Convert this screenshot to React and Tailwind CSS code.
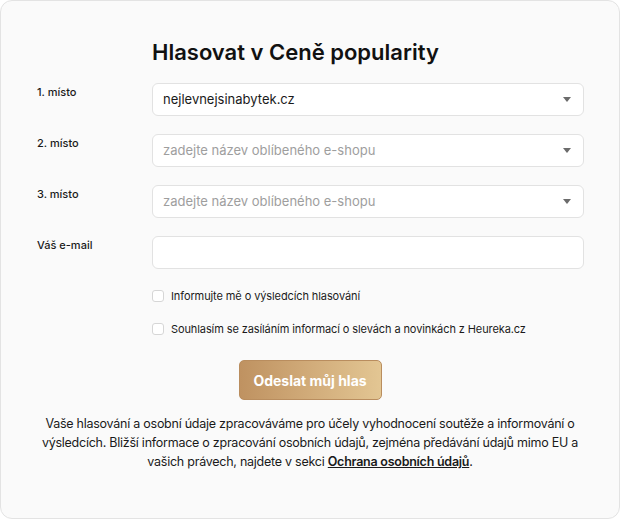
import React, { useState } from 'react';

const font = { fontFamily: 'Inter, "Noto Sans", sans-serif' };

function Arrow() {
  return (
    <svg width="8" height="5" viewBox="0 0 8 5" className="shrink-0">
      <path d="M0 0h8L4 5z" fill="#6b6b6b" />
    </svg>
  );
}

function SelectRow({ label, value, placeholder }) {
  return (
    <div className="flex">
      <div className="w-[115px] shrink-0 pt-[1px] text-[11px] font-medium text-[#1a1a1a]">{label}</div>
      <div className="flex h-[33px] w-[432px] items-center justify-between rounded-[6px] border border-[#e2e2e2] bg-white pl-[10px] pr-[12px]">
        {value ? (
          <span className="text-[13px] text-[#1a1a1a]">{value}</span>
        ) : (
          <span className="text-[13px] text-[#9e9e9e]">{placeholder}</span>
        )}
        <Arrow />
      </div>
    </div>
  );
}

function Check({ label }) {
  const [on, setOn] = useState(false);
  return (
    <label className="flex items-center gap-[7px] cursor-pointer">
      <span
        onClick={() => setOn(!on)}
        className={`h-[12px] w-[12px] rounded-[3px] border ${on ? 'border-[#c09464] bg-[#c09464]' : 'border-[#d6d6d6] bg-white'}`}
      />
      <span className="text-[11px] tracking-[-0.1px] text-[#1a1a1a]">{label}</span>
    </label>
  );
}

export default function App() {
  return (
    <div style={font} className="h-[519px] w-[620px] rounded-[12px] border border-[#e3e3e3] bg-[#fafafa] pl-[36px]">
      <h1 className="ml-[115px] pt-[37px] text-[22px] font-semibold leading-[28px] text-[#111]">
        Hlasovat v Ceně popularity
      </h1>

      <div className="mt-[17px] flex flex-col gap-[18px]">
        <SelectRow label="1. místo" value="nejlevnejsinabytek.cz" />
        <SelectRow label="2. místo" placeholder="zadejte název oblíbeného e-shopu" />
        <SelectRow label="3. místo" placeholder="zadejte název oblíbeného e-shopu" />
        <div className="flex">
          <div className="w-[115px] shrink-0 pt-[1px] text-[11px] font-medium text-[#1a1a1a]">Váš e-mail</div>
          <input className="h-[33px] w-[432px] rounded-[6px] border border-[#e2e2e2] bg-white px-[10px] text-[13px] outline-none" />
        </div>
      </div>

      <div className="ml-[115px] mt-[19px] flex flex-col gap-[16px]">
        <Check label="Informujte mě o výsledcích hlasování" />
        <Check label="Souhlasím se zasíláním informací o slevách a novinkách z Heureka.cz" />
      </div>

      <div className="mr-[36px] mt-[23px] flex justify-center">
        <button className="h-[40px] w-[143px] rounded-[5px] border border-[#b98d5e] bg-gradient-to-r from-[#bf9261] to-[#e3c693] text-[14px] font-bold text-white">
          Odeslat můj hlas
        </button>
      </div>

      <p className="mr-[36px] mt-[14px] text-center text-[12.5px] leading-[19px] tracking-[-0.25px] whitespace-nowrap text-[#1a1a1a]">
        Vaše hlasování a osobní údaje zpracováváme pro účely vyhodnocení soutěže a informování o
        <br />
        výsledcích. Bližší informace o zpracování osobních údajů, zejména předávání údajů mimo EU a
        <br />
        vašich právech, najdete v sekci <a className="font-semibold underline">Ochrana osobních údajů</a>.
      </p>
    </div>
  );
}
